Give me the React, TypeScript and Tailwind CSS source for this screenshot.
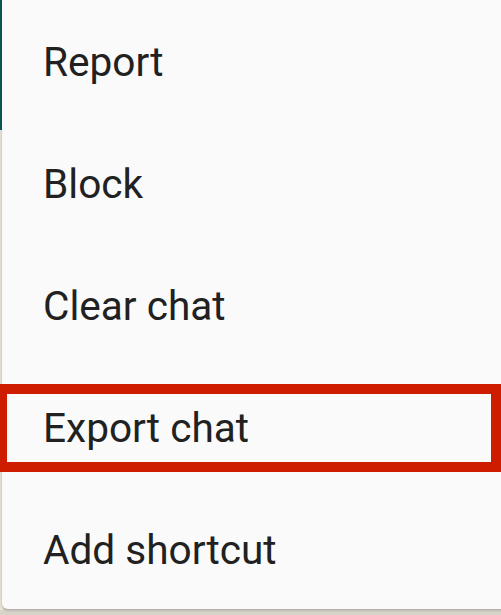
export default function App() {
  const items = ["Report", "Block", "Clear chat", "Export chat", "Add shortcut"];
  return (
    <div className="relative w-[501px] h-[615px] overflow-hidden bg-[#d9d4ca]">
      <div className="absolute left-0 top-0 w-[3px] h-[130px] bg-[#0d5c57]" />
      <div className="absolute left-0 top-[130px] w-[3px] h-[480px] bg-[#ebe6d8]" />
      <div className="absolute left-[2px] top-[-10px] w-[520px] h-[619px] overflow-hidden rounded-[6px] bg-[#fafafa] shadow-[0_1px_3px_rgba(0,0,0,0.25)] flex flex-col">
        <div className="h-[11px] shrink-0" />
        {items.map((t) => (
          <div
            key={t}
            className="h-[122px] shrink-0 flex items-center pl-[41px] text-[40.6px] text-[#212121]"
            style={{ fontFamily: "Roboto, 'Liberation Sans', sans-serif" }}
          >
            {t}
          </div>
        ))}
      </div>
      <div className="absolute left-[-3px] top-[384px] w-[504px] h-[88px] border-[10px] border-[#cd1c00]" />
    </div>
  );
}
